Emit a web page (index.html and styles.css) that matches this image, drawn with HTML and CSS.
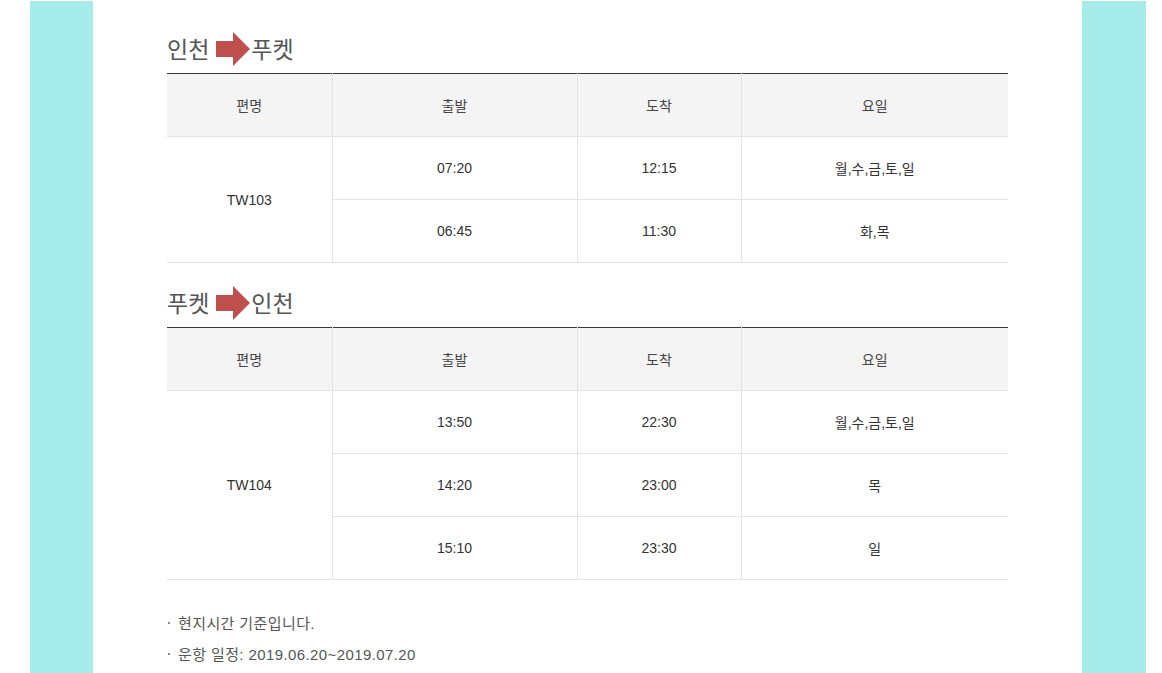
FILE: index.html
```html
<!DOCTYPE html>
<html lang="ko">
<head>
<meta charset="utf-8">
<link rel="stylesheet" href="styles.css">
</head>
<body>
<div class="page">
  <div class="side"></div>
  <main class="main">
    <section class="route">
      <h2 class="route-title">인천<svg class="arrow" viewBox="0 0 34 34" width="34" height="34"><rect x="0" y="9" width="18" height="16" fill="#c0504d"/><polygon points="17,0 34,17 17,34" fill="#c0504d"/></svg>푸켓</h2>
      <table class="sched">
        <colgroup><col class="c1"><col class="c2"><col class="c3"><col class="c4"></colgroup>
        <thead>
          <tr><th>편명</th><th>출발</th><th>도착</th><th>요일</th></tr>
        </thead>
        <tbody>
          <tr><td rowspan="2">TW103</td><td>07:20</td><td>12:15</td><td>월,수,금,토,일</td></tr>
          <tr><td>06:45</td><td>11:30</td><td>화,목</td></tr>
        </tbody>
      </table>
    </section>
    <section class="route second">
      <h2 class="route-title">푸켓<svg class="arrow" viewBox="0 0 34 34" width="34" height="34"><rect x="0" y="9" width="18" height="16" fill="#c0504d"/><polygon points="17,0 34,17 17,34" fill="#c0504d"/></svg>인천</h2>
      <table class="sched">
        <colgroup><col class="c1"><col class="c2"><col class="c3"><col class="c4"></colgroup>
        <thead>
          <tr><th>편명</th><th>출발</th><th>도착</th><th>요일</th></tr>
        </thead>
        <tbody>
          <tr><td rowspan="3">TW104</td><td>13:50</td><td>22:30</td><td>월,수,금,토,일</td></tr>
          <tr><td>14:20</td><td>23:00</td><td>목</td></tr>
          <tr><td>15:10</td><td>23:30</td><td>일</td></tr>
        </tbody>
      </table>
    </section>
    <ul class="notes">
      <li>현지시간 기준입니다.</li>
      <li>운항 일정: 2019.06.20~2019.07.20</li>
    </ul>
  </main>
  <div class="side side-right"></div>
</div>
</body>
</html>
```

FILE: styles.css
```css
html, body {
  margin: 0;
  padding: 0;
  background: #fff;
}
body {
  font-family: "Liberation Sans", "Noto Sans CJK KR", sans-serif;
  color: #333;
}
.page {
  display: flex;
  margin-left: 30px;
  padding-top: 1px;
  height: 672px;
  overflow: hidden;
}
.side {
  width: 63px;
  flex: 0 0 63px;
  background: #a6ecea;
}
.side-right {
  width: 64px;
  flex-basis: 64px;
}
.main {
  flex: 0 0 989px;
  box-sizing: border-box;
  padding: 27px 74px 0;
}
.route-title {
  margin: 0 0 5px;
  height: 40px;
  line-height: 40px;
  font-size: 23px;
  font-weight: normal;
  color: #555;
  font-family: "Noto Sans CJK KR", sans-serif;
  display: flex;
  align-items: center;
}
.arrow {
  display: block;
  margin: 1px 1px 0 7px;
}
.second {
  margin-top: 19px;
}
.sched {
  width: 841px;
  border-collapse: collapse;
  table-layout: fixed;
  border-top: 1px solid #3a3a3a;
  font-size: 14px;
}
.c1 { width: 165px; }
.c2 { width: 245px; }
.c3 { width: 164px; }
.c4 { width: 267px; }
.sched th, .sched td {
  height: 62px;
  padding: 0;
  text-align: center;
  vertical-align: middle;
  border-bottom: 1px solid #e3e3e3;
  border-left: 1px solid #e3e3e3;
  color: #333;
  font-weight: normal;
}
.sched th {
  background: #f4f4f4;
  font-family: "Noto Sans CJK KR", sans-serif;
  color: #444;
}
.sched tr > :first-child {
  border-left: none;
}
.sched tbody tr + tr > :first-child {
  border-left: 1px solid #e3e3e3;
}
.notes {
  list-style: none;
  margin: 27px 0 0;
  padding: 0;
  font-size: 15px;
  letter-spacing: 0.4px;
  color: #555;
}
.notes li {
  display: flex;
  align-items: center;
  height: 31px;
}
.notes li::before {
  content: "";
  width: 2px;
  height: 2px;
  background: #888;
  margin: 0 8px 0 1px;
}
```
